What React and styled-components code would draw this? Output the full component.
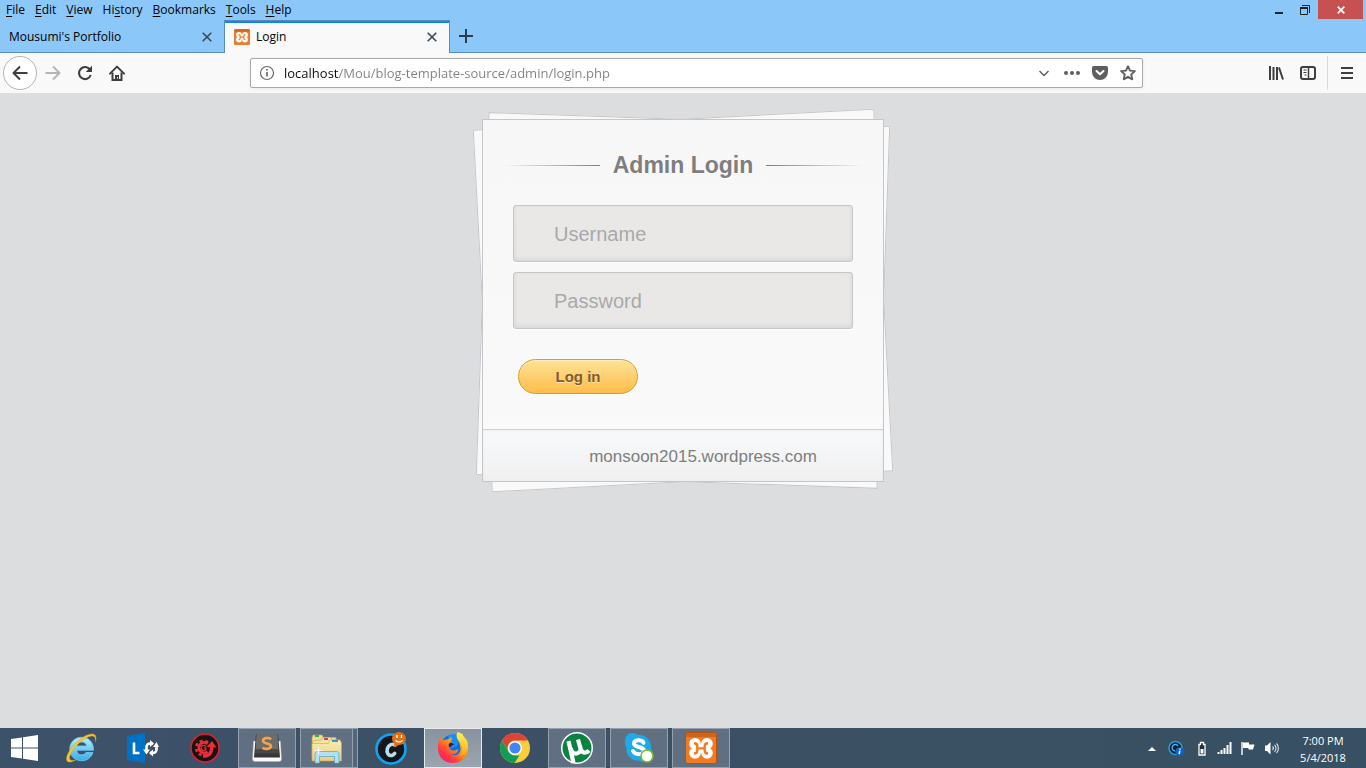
import React from "react";
import styled, { createGlobalStyle, css } from "styled-components";

const ui = '"Open Sans", "Noto Sans", sans-serif';
const web = '"Liberation Sans", Arial, Helvetica, sans-serif';

const GlobalStyle = createGlobalStyle`
  *, *::before, *::after { box-sizing: border-box; }
  html, body, #root { height: 100%; }
  body { margin: 0; overflow: hidden; font-family: ${ui}; font-size: 12px; color: #111; background: #dcdddf; }
  button, input { font: inherit; color: inherit; }
  button { border: 0; padding: 0; background: none; cursor: pointer; }
  svg { display: block; flex: none; }
`;

const Screen = styled.div`
  height: 100%;
  display: flex;
  flex-direction: column;
`;

const TitleBar = styled.header`
  height: 20px;
  flex: none;
  display: flex;
  justify-content: space-between;
  background: #8cc7fa;
`;

const MenuBar = styled.nav`
  display: flex;
  align-items: center;
  gap: 10px;
  padding-left: 6px;
`;

const MenuItem = styled.button`
  line-height: 20px;
  font-size: 12px;
  color: #000;
  u { text-underline-offset: 2px; }
`;

const WindowControls = styled.div`
  display: flex;
  padding-right: 3px;
`;

const WindowButton = styled.button`
  width: ${(p) => (p.$close ? 45 : 26)}px;
  height: 19px;
  display: flex;
  align-items: center;
  justify-content: center;
  background: ${(p) => (p.$close ? "#c75050" : "transparent")};
`;

const TabStrip = styled.div`
  height: 33px;
  flex: none;
  display: flex;
  background: #8cc7fa;
  box-shadow: inset 0 -1px 0 #5a8cb8;
`;

const Tab = styled.div`
  width: ${(p) => (p.$active ? 226 : 224)}px;
  display: flex;
  align-items: center;
  gap: 6px;
  padding: 0 12px 0 9px;
  color: #000;
  ${(p) =>
    p.$active &&
    css`
      background: #f9f9fa;
      border: 1px solid #5a8cb8;
      border-bottom: 0;
      box-shadow: inset 0 2px 0 #0a84ff;
    `}
`;

const TabTitle = styled.button`
  flex: 1;
  text-align: left;
  line-height: 16px;
`;

const IconButton = styled.button`
  width: 32px;
  height: 32px;
  display: flex;
  align-items: center;
  justify-content: center;
  flex: none;
`;

const TabClose = styled.button`
  display: flex;
`;

const Toolbar = styled.div`
  height: 41px;
  flex: none;
  display: flex;
  align-items: center;
  padding: 0 3px;
  background: #f9f9fa;
  border-bottom: 1px solid #dededf;
`;

const BackButton = styled.button`
  width: 34px;
  height: 34px;
  border-radius: 50%;
  border: 1px solid #b3b3b4;
  background: #fff;
  display: flex;
  align-items: center;
  justify-content: center;
  flex: none;
`;

const Spacer = styled.div`
  flex: 0 0 117px;
`;

const UrlBar = styled.div`
  flex: 1;
  height: 30px;
  display: flex;
  align-items: center;
  padding: 0 6px 0 8px;
  gap: 9px;
  background: #fff;
  border: 1px solid #a9a9ab;
  border-radius: 2px;
  box-shadow: 0 1px 4px rgba(0, 0, 0, 0.06);
`;

const UrlInput = styled.input`
  flex: 1;
  min-width: 0;
  border: 0;
  padding: 0;
  outline: 0;
  height: 28px;
  font-size: 13px;
  color: #737373;
  background: linear-gradient(90deg, #0c0c0d 55px, #808080 55px);
  background-clip: text;
  -webkit-text-fill-color: transparent;
`;

const UrlActions = styled.div`
  display: flex;
  align-items: center;
  gap: 12px;
`;

const ToolDivider = styled.div`
  width: 1px;
  height: 34px;
  margin: 0 3px;
  background: #d9d9da;
`;

const Page = styled.main`
  flex: 1;
  min-height: 0;
  display: flex;
  justify-content: center;
  align-items: flex-start;
  padding-top: 25px;
  background: #dcdddf;
`;

const Card = styled.section`
  position: relative;
  z-index: 0;
  width: 402px;
  font-family: ${web};
  &::before, &::after {
    content: "";
    position: absolute;
    inset: 0;
    z-index: -1;
    border: 1px solid #c4c6ca;
    background: #f9f9f9;
  }
  &::before { transform: rotate(-3deg); }
  &::after { transform: rotate(2deg); }
`;

const Sheet = styled.div`
  border: 1px solid #c4c6ca;
  background: linear-gradient(#f7f7f7, #fafafa);
`;

const Form = styled.form`
  padding: 32px 30px 35px;
  display: flex;
  flex-direction: column;
`;

const Heading = styled.div`
  display: flex;
  align-items: center;
  gap: 13px;
  margin: 0 -10px 26px;
  &::before, &::after { content: ""; flex: 1; height: 1px; }
  &::before { background: linear-gradient(to left, #7e7e7e, #f7f7f7); }
  &::after { background: linear-gradient(to right, #7e7e7e, #f7f7f7); }
`;

const Title = styled.h1`
  margin: 0;
  font-size: 23px;
  line-height: 27px;
  font-weight: 700;
  color: #7e7e7e;
  text-shadow: 0 1px 0 #fff;
`;

const Field = styled.input`
  width: 100%;
  height: 57px;
  margin-bottom: 10px;
  padding: 2px 40px 0;
  border: 1px solid #c4c6ca;
  border-radius: 3px;
  background: #e9e8e6;
  box-shadow: inset 0 -2px 5px rgba(0, 0, 0, 0.08), 0 1px 0 #fff;
  font-size: 20px;
  color: #777;
  outline: 0;
  &::placeholder { color: #a9a9a9; opacity: 1; }
`;

const LoginButton = styled.button`
  align-self: flex-start;
  width: 120px;
  height: 35px;
  margin: 20px 0 0 5px;
  border: 1px solid #d69e31;
  border-radius: 18px;
  background: linear-gradient(#fee395, #febd4a);
  box-shadow: inset 0 1px 0 rgba(255, 255, 255, 0.4), 0 1px 0 #fff;
  color: #85592e;
  font-size: 15px;
  font-weight: 700;
  text-shadow: 0 1px 0 rgba(255, 255, 255, 0.5);
`;

const CardFooter = styled.footer`
  height: 52px;
  padding: 2px 0 0 40px;
  display: flex;
  align-items: center;
  justify-content: center;
  border-top: 1px solid #cfd1d4;
  background: linear-gradient(#f7f9fb, #f0f0f0);
  box-shadow: inset 0 1px 3px rgba(0, 0, 0, 0.05);
`;

const FooterLink = styled.a`
  font-size: 17px;
  color: #7e7e7e;
  text-decoration: none;
`;

const Taskbar = styled.footer`
  height: 40px;
  flex: none;
  display: flex;
  justify-content: space-between;
  background: linear-gradient(90deg, #3c5269, #3c5064 50%, #385063);
  color: #fff;
`;

const TaskGroup = styled.div`
  display: flex;
  gap: 4px;
`;

const StartButton = styled.button`
  width: 48px;
  height: 40px;
  display: flex;
  align-items: center;
  justify-content: center;
`;

const TaskButton = styled.button`
  width: 58px;
  height: 40px;
  display: flex;
  align-items: center;
  justify-content: center;
  border: 1px solid transparent;
  ${(p) => p.$open && css`background: #607082; border-color: #95a1ad;`}
  ${(p) => p.$stacked && css`padding-right: 5px; box-shadow: inset -4px 0 0 #51677b, inset -5px 0 0 #95a1ad;`}
  ${(p) => p.$active && css`background: linear-gradient(#8793a0, #9ba5af); border-color: #e6eaed;`}
`;

const Tray = styled.div`
  display: flex;
  align-items: center;
  gap: 8px;
  padding-right: 12px;
`;

const TrayButton = styled.button`
  display: flex;
`;

const Clock = styled.time`
  width: 62px;
  margin-left: 4px;
  text-align: center;
  line-height: 17px;
  font-size: 11px;
  padding-top: 2px;
`;

const Svg = ({ s = 16, w, h, vb, children, ...rest }) => (
  <svg width={w || s} height={h || s} viewBox={vb || `0 0 ${w || s} ${h || s}`} fill="none" aria-hidden="true" {...rest}>
    {children}
  </svg>
);

const CloseX = () => (
  <Svg s={10}><path d="M.7.7l8.6 8.6M9.3.7L.7 9.3" stroke="#38495a" strokeWidth="1.6" /></Svg>
);

const Xampp = ({ s }) => (
  <Svg s={s} vb="0 0 32 32">
    <rect x=".5" y=".5" width="31" height="31" rx="2.500" fill="#f47a20" stroke="#b5520f" />
    <path d="M1 3a2 2 0 0 1 2-2h26a2 2 0 0 1 2 2v2H1z" fill="#b9551a" opacity=".6" />
    <g fill="#fff">
      <circle cx="10" cy="11.700" r="5.800" /><circle cx="22" cy="11.700" r="5.800" />
      <circle cx="10" cy="21" r="5.800" /><circle cx="22" cy="21" r="5.800" />
      <path d="M8 12h16v9H8z" />
    </g>
    <path d="M9 11.200c3 0 3.300 1.500 3.300 3v4.300c0 1.500-.3 3-3.300 3M23 11.200c-3 0-3.300 1.500-3.300 3v4.300c0 1.500.3 3 3.300 3M12 16.400h8" stroke="#f47a20" strokeWidth="2.400" />
  </Svg>
);

const WindowsLogo = () => (
  <Svg w={27} h={26}><path d="M0 4l11-1.600V12.400H0zM12 2.200L27 0v12.400H12zM0 13.400h11v10L0 21.900zM12 13.400h15V26l-15-2.300z" fill="#fff" /></Svg>
);

const IeIcon = () => (
  <Svg w={32} h={32}>
    <defs><linearGradient id="ie" x1="0" y1="0" x2="0" y2="1"><stop offset="0" stopColor="#b5edfe" /><stop offset="1" stopColor="#35b0ec" /></linearGradient></defs>
    <path d="M28.500 18.200H11.600c.2 3 2.300 4.700 5 4.700 2 0 3.500-.9 4.300-2.400h7c-1.600 5.100-5.900 8.200-11.300 8.200C9.800 28.700 4.800 23.800 4.800 17S9.900 5.300 16.600 5.300c7.400 0 12.200 5.400 11.900 12.900zM21.600 14c-.3-2.500-2.200-4-4.900-4-2.600 0-4.500 1.500-5 4z" fill="url(#ie)" stroke="#6cc6ef" strokeWidth=".9" />
    <path d="M30.500 9.500c1-3.300.6-6-1.200-7C25.800.3 17.300 4.200 10.300 11.500 3.500 18.500-.2 26.700 2.300 29.300c1.500 1.500 4.800.8 8.400-1.400-2.500.9-4.600 1-5.600-.1-2-2.200 1.400-9 7-14.900C18.500 6.500 25.500 2.900 28.500 4.200c1.700.7 2.300 2.600 2 5.300z" fill="#f8c630" stroke="#d9a21b" strokeWidth=".5" />
  </Svg>
);

const LyncIcon = () => (
  <Svg w={32} h={32}>
    <path d="M0 4L18 1v30L0 28z" fill="#0072c6" />
    <path d="M7 10.500V21h5.500" stroke="#fff" strokeWidth="2.600" />
    <path d="M19.500 19v-4a3.500 3.500 0 0 1 3.500-3.500h3M29.500 13v4.500a3.500 3.500 0 0 1-3.500 3.500h-3" stroke="#fff" strokeWidth="2.600" />
    <path d="M16 17.500h7l-3.500 5zM26 15h6l-2.500-5zM23 8v7l4-3.500zM26 24.500v-7L22 21z" fill="#fff" />
  </Svg>
);

const RedGearIcon = () => (
  <Svg w={30} h={30}>
    <circle cx="15" cy="15" r="14" fill="#161315" stroke="#e0202b" strokeWidth="1.500" />
    <path d="M17.500 10.800A5.200 5.200 0 1 0 17.500 18.700" stroke="#ef2b34" strokeWidth="3" />
    <path d="M18 9.500A7.200 7.200 0 1 0 18 20.500" stroke="#ef2b34" strokeWidth="2.600" strokeDasharray="3 2.600" />
    <path d="M15.800 13.300a2.600 2.600 0 1 0 0 3.200v-1.700H14" stroke="#ef2b34" strokeWidth="1.300" />
    <path d="M13 23c6 .5 9-3 8.800-10" stroke="#ef2b34" strokeWidth="3.400" />
    <path d="M16.500 14l5.500-6 4.500 6.500z" fill="#ef2b34" />
  </Svg>
);

const SublimeIcon = () => (
  <Svg w={30} h={30}>
    <path d="M1.500 8L.5 26A2.500 2.500 0 0 0 3 28.500h24a2.500 2.500 0 0 0 2.500-2.500l-1-18z" fill="#fafafa" stroke="#aaa" strokeWidth=".5" />
    <path d="M4 1h22l2 23.500H2z" fill="#363636" />
    <path d="M4.500 1h21l1 15.500h-23z" fill="#6c6c6c" />
    <path d="M3.500 16.500h23l.4 4H3.100z" fill="#484848" />
    <path d="M19.200 6.200C16 4 11 5 11 7.800c0 3.300 8 2 8 5.300 0 2.800-5 3.700-8.500 1.700" stroke="#f9a24b" strokeWidth="2.600" />
  </Svg>
);

const ExplorerIcon = () => (
  <Svg w={34} h={32}>
    <defs><linearGradient id="fold" x1="0" y1="0" x2="0" y2="1"><stop offset="0" stopColor="#f9edb4" /><stop offset="1" stopColor="#e9cf78" /></linearGradient></defs>
    <path d="M2 6l1-3h9l1.500 2.500H26V26H2z" fill="#efdc93" stroke="#c5a84e" strokeWidth=".6" />
    <path d="M5 3h4v2H5z" fill="#30b44a" />
    <path d="M2.500 9l9-1 1-2.500h8L22 8h8v20H2.500z" fill="#f4e3a0" stroke="#c5a84e" strokeWidth=".6" />
    <path d="M14 6h4v2h-4z" fill="#d54236" />
    <path d="M2 11.500h16.500L20 8h10l1.500 3v18H2z" fill="url(#fold)" stroke="#c5a84e" strokeWidth=".6" />
    <path d="M22 8h6v2h-6z" fill="#3e91d8" />
    <path d="M5 31V22c0-1.500 1-2.500 2.500-2.500h19C28 19.500 29 20.500 29 22v9h-4.500v-6.500h-15V31z" fill="#b4e0f3" stroke="#5aaccf" strokeWidth=".8" />
    <path d="M8.500 14l.7 3.800 3.800.7-3.800.7-.7 3.800-.7-3.800-3.800-.7 3.800-.7z" fill="#fff" />
  </Svg>
);

const CIcon = () => (
  <Svg w={32} h={34}>
    <circle cx="16" cy="18" r="14.500" fill="#14181d" stroke="#11a4f2" strokeWidth="2.600" />
    <path d="M20 14c-2.500-1.800-6.500-.3-7.600 3.400-1.200 4.400 1 7.700 4.300 7 1.200-.3 2.200-1 3-2" stroke="#b8ddec" strokeWidth="3.600" strokeLinecap="round" />
    <ellipse cx="24" cy="7.500" rx="7" ry="6.500" fill="#e17014" />
    <path d="M19 11l.5 5.500 5-3z" fill="#e17014" />
    <path d="M22 4v3M26.500 4v3M20.500 9.500c2 1.600 5 1.600 7 0" stroke="#fff" strokeWidth="1.400" />
  </Svg>
);

const FirefoxIcon = () => (
  <Svg w={32} h={32}>
    <defs>
      <linearGradient id="fx" x1="1" y1="0" x2="0" y2="1"><stop offset="0" stopColor="#ffe226" /><stop offset=".4" stopColor="#ff980e" /><stop offset=".7" stopColor="#ff3647" /><stop offset="1" stopColor="#e31587" /></linearGradient>
      <linearGradient id="fy" x1="0" y1="0" x2="0" y2="1"><stop offset="0" stopColor="#fff44f" /><stop offset="1" stopColor="#ffa71c" /></linearGradient>
    </defs>
    <circle cx="16" cy="14.500" r="12" fill="#0a6fe6" />
    <path d="M11 4c4-3 10-2 13 2l-4 8-8 3z" fill="#1b8df5" />
    <path d="M3.500 5.500l2.500 3C7.500 7.500 9 7.300 10.500 7.500L15 5l-1 5 3.500 2-5 3.500c1 4 6 3.500 9 1.500-1 4-4 6-7.500 5.500 6 2.500 10-1.500 9.500-6.500L22 9l9 4c.5 11-5 18-15 18C6 31 .5 23.500 1 15c.2-4 1-7 2.500-9.500z" fill="url(#fx)" />
    <path d="M20.500 0c-2 5 0 7.500 2.500 10.500 3 4 3 9 0 13.500 5-1 8-5.500 8-11 0-6-5-8-5.500-11z" fill="url(#fy)" />
    <path d="M12.500 15.500l5-3.500-4-1.500c-2 1-2.500 3-1 5z" fill="#20205c" />
  </Svg>
);

const ChromeIcon = () => (
  <Svg w={30} h={30}>
    <circle cx="15" cy="15" r="15" fill="#f9cd3d" />
    <path d="M2 7.500A15 15 0 0 1 28 7.500H15a7.500 7.500 0 0 0-6.500 11.200z" fill="#db4437" />
    <path d="M2 7.500l6.500 11.200A7.500 7.500 0 0 0 15 22.500h4.400L14.500 30A15 15 0 0 1 2 7.500z" fill="#0f9d58" />
    <circle cx="15" cy="15" r="7" fill="#fff" /><circle cx="15" cy="15" r="5.600" fill="#4285f4" />
  </Svg>
);

const UtorrentIcon = () => (
  <Svg w={32} h={32}>
    <circle cx="16" cy="16" r="16" fill="#fff" /><circle cx="16" cy="16" r="14.500" fill="#0a8341" />
    <path d="M7.500 9l5 22" stroke="#fff" strokeWidth="4.200" />
    <path d="M9.500 16c1 4.200 3.200 6 6.200 5.500 3.300-.6 4.500-3 3.500-7M17 7.500l2.200 8c1 4 3 5.500 5.300 5 1.500-.3 2.500-.9 3.500-2" stroke="#fff" strokeWidth="4.200" />
  </Svg>
);

const SkypeIcon = () => (
  <Svg w={32} h={32}>
    <path d="M9 1c2.500 0 4 .8 5.500 1.800C22 2 29 8.500 28 16.500c2.500 4.500 1.500 9-1.500 11.500-3 2.500-7 2.500-10 .8C8.500 29 3 23.500 3.300 15.500 0 8.500 3 1 9 1z" fill="#1fa9e8" />
    <path d="M20.500 10.800c-1.500-3.500-9.500-3.500-9.500.6 0 4.800 10 2.500 10 7.400 0 4.300-9 4.500-11 .2" stroke="#fff" strokeWidth="4" strokeLinecap="round" />
    <circle cx="24" cy="24" r="6" fill="#fff" stroke="#7cb928" strokeWidth="1.600" />
  </Svg>
);

const menus = [["", "F", "ile"], ["", "E", "dit"], ["", "V", "iew"], ["Hi", "s", "tory"], ["", "B", "ookmarks"], ["", "T", "ools"], ["", "H", "elp"]];

const tasks = [
  { name: "Internet Explorer", icon: <IeIcon /> },
  { name: "Lync", icon: <LyncIcon /> },
  { name: "Game Booster", icon: <RedGearIcon /> },
  { name: "Sublime Text", icon: <SublimeIcon />, open: true },
  { name: "File Explorer", icon: <ExplorerIcon />, open: true, stacked: true },
  { name: "Messenger", icon: <CIcon /> },
  { name: "Firefox", icon: <FirefoxIcon />, active: true },
  { name: "Chrome", icon: <ChromeIcon /> },
  { name: "uTorrent", icon: <UtorrentIcon />, open: true },
  { name: "Skype", icon: <SkypeIcon />, open: true },
  { name: "XAMPP", icon: <Xampp s={32} />, open: true },
];

export default function App() {
  return (
    <Screen>
      <GlobalStyle />
      <TitleBar>
        <MenuBar aria-label="Application menu">
          {menus.map(([a, k, b]) => (
            <MenuItem key={k + b} type="button">{a}<u>{k}</u>{b}</MenuItem>
          ))}
        </MenuBar>
        <WindowControls>
          <WindowButton aria-label="Minimize"><Svg w={8} h={12}><path d="M0 8h8v2H0z" fill="#222" /></Svg></WindowButton>
          <WindowButton aria-label="Restore"><Svg s={10}><path d="M.5 3h7v6.500h-7zM2 .5h7.500V8" stroke="#222" /><path d="M0 2h8v2H0z" fill="#222" /></Svg></WindowButton>
          <WindowButton $close aria-label="Close window"><Svg s={8}><path d="M.7.7l6.600 6.600M7.300.7L.7 7.300" stroke="#fff" strokeWidth="1.700" /></Svg></WindowButton>
        </WindowControls>
      </TitleBar>
      <TabStrip>
        <Tab>
          <TabTitle>Mousumi's Portfolio</TabTitle>
          <TabClose aria-label="Close tab"><CloseX /></TabClose>
        </Tab>
        <Tab $active>
          <Xampp s={16} />
          <TabTitle>Login</TabTitle>
          <TabClose aria-label="Close tab"><CloseX /></TabClose>
        </Tab>
        <IconButton aria-label="New tab"><Svg s={14}><path d="M7 0v14M0 7h14" stroke="#2a3b4c" strokeWidth="2" /></Svg></IconButton>
      </TabStrip>
      <Toolbar>
        <BackButton aria-label="Back"><Svg><path d="M15.500 8H1.500M8 1.500L1.500 8 8 14.500" stroke="#3e3e40" strokeWidth="2" strokeLinejoin="round" /></Svg></BackButton>
        <IconButton aria-label="Forward"><Svg><path d="M.5 8h14M8 1.500L14.500 8 8 14.500" stroke="#b5b5b6" strokeWidth="2" strokeLinejoin="round" /></Svg></IconButton>
        <IconButton aria-label="Reload"><Svg><path d="M13 4.700A6 6 0 1 0 13.700 10" stroke="#3e3e40" strokeWidth="2.100" /><path d="M15 .7V7H8.700z" fill="#3e3e40" /></Svg></IconButton>
        <IconButton aria-label="Home"><Svg><path d="M1 8.600L8 1.600l7 7" stroke="#3e3e40" strokeWidth="2" strokeLinecap="round" strokeLinejoin="round" /><path d="M3.500 7.500V15h9V7.500" stroke="#3e3e40" strokeWidth="2" /><path d="M6 10h4v5H6z" fill="#3e3e40" /><path d="M8 12h1v1.500H8z" fill="#f9f9fa" /></Svg></IconButton>
        <Spacer />
        <UrlBar>
          <Svg><circle cx="8" cy="8" r="6.500" stroke="#6a6a6b" strokeWidth="1.200" /><path d="M8 7v4.500M8 4v1.600" stroke="#6a6a6b" strokeWidth="1.700" /></Svg>
          <UrlInput type="text" aria-label="Address" defaultValue="localhost/Mou/blog-template-source/admin/login.php" />
          <UrlActions>
            <Svg><path d="M3.500 6L8 10.500 12.500 6" stroke="#5e5e60" strokeWidth="1.400" /></Svg>
            <Svg><circle cx="2" cy="8" r="2" fill="#5e5e60" /><circle cx="8" cy="8" r="2" fill="#5e5e60" /><circle cx="14" cy="8" r="2" fill="#5e5e60" /></Svg>
            <Svg><path d="M1.800 1h12.400A1.800 1.800 0 0 1 16 2.800V7A8 8 0 0 1 0 7V2.800A1.800 1.800 0 0 1 1.800 1z" fill="#5e5e60" /><path d="M4.500 6L8 9.300 11.500 6" stroke="#fff" strokeWidth="2" strokeLinecap="round" strokeLinejoin="round" /></Svg>
            <Svg><path d="M8 1.200l2 4.500 4.900.5-3.700 3.300 1.100 4.900L8 11.900l-4.300 2.500 1.100-4.900L1.100 6.200 6 5.700z" stroke="#5e5e60" strokeWidth="1.800" strokeLinejoin="round" /></Svg>
          </UrlActions>
        </UrlBar>
        <Spacer />
        <IconButton aria-label="Library"><Svg><path d="M2 1v14M5.500 2v13M9 2v13" stroke="#3e3e40" strokeWidth="2" /><path d="M11 2.500L15 14.500" stroke="#3e3e40" strokeWidth="2" /></Svg></IconButton>
        <IconButton aria-label="Sidebars"><Svg><rect x="1" y="2" width="14" height="12" rx="2" stroke="#3e3e40" strokeWidth="2" /><path d="M8.500 2v12" stroke="#3e3e40" strokeWidth="1.500" /><path d="M3.500 5h3M3.500 7.500h3M4.500 10h2" stroke="#3e3e40" /></Svg></IconButton>
        <ToolDivider />
        <IconButton aria-label="Open menu"><Svg s={12}><path d="M0 1h12M0 6h12M0 11h12" stroke="#3e3e40" strokeWidth="2" /></Svg></IconButton>
      </Toolbar>
      <Page>
        <Card>
          <Sheet>
            <Form onSubmit={(e) => e.preventDefault()}>
              <Heading><Title>Admin Login</Title></Heading>
              <Field type="text" placeholder="Username" aria-label="Username" />
              <Field type="password" placeholder="Password" aria-label="Password" />
              <LoginButton type="submit">Log in</LoginButton>
            </Form>
            <CardFooter><FooterLink href="#">monsoon2015.wordpress.com</FooterLink></CardFooter>
          </Sheet>
        </Card>
      </Page>
      <Taskbar>
        <TaskGroup>
          <StartButton aria-label="Start"><WindowsLogo /></StartButton>
          {tasks.map((t) => (
            <TaskButton key={t.name} aria-label={t.name} $open={t.open} $stacked={t.stacked} $active={t.active}>{t.icon}</TaskButton>
          ))}
        </TaskGroup>
        <Tray>
          <TrayButton aria-label="Show hidden icons"><Svg><path d="M4 11l4-4 4 4z" fill="#fff" /></Svg></TrayButton>
          <TrayButton aria-label="Updates"><Svg><circle cx="7.500" cy="8" r="6.500" fill="#111b24" stroke="#1aa0e8" strokeWidth="1.500" /><path d="M10 6a3.200 3.200 0 1 0-3 5" stroke="#3db8f2" strokeWidth="1.500" /><circle cx="11.500" cy="11.500" r="4.300" fill="#1264c8" /><path d="M12 8.500v1.200M11.800 10.700l-.6 3.400" stroke="#fff" strokeWidth="1.500" /></Svg></TrayButton>
          <TrayButton aria-label="Battery"><Svg><path d="M8.500 2.500h3v2h1.500v10.500H7V4.500h1.500z" fill="#222f3b" stroke="#fff" strokeWidth="1.300" /><path d="M8.500 9h3v4.500h-3z" fill="#fff" /></Svg></TrayButton>
          <TrayButton aria-label="Network"><Svg><path d="M2.500 14v-2M5.500 14v-4M8.500 14V8M11.500 14V5M14.500 14V2" stroke="#fff" strokeWidth="2" /></Svg></TrayButton>
          <TrayButton aria-label="Action center"><Svg><path d="M2 2v13" stroke="#fff" strokeWidth="1.400" /><path d="M3 2.500h6v2h5.500l-1.500 5H8.500V8H3z" fill="#fff" /></Svg></TrayButton>
          <TrayButton aria-label="Volume"><Svg><path d="M1 5.500h2L6.500 2v12.500L3 11H1z" fill="#fff" /><path d="M8.500 6.500c1 1 1 2.500 0 3.500M10.500 4.800c2 2 2 5 0 7M12.500 3.500c2.500 2.500 2.500 7 0 9.500" stroke="#dbe2e8" strokeWidth="1.100" /></Svg></TrayButton>
          <Clock>7:00 PM<br />5/4/2018</Clock>
        </Tray>
      </Taskbar>
    </Screen>
  );
}
